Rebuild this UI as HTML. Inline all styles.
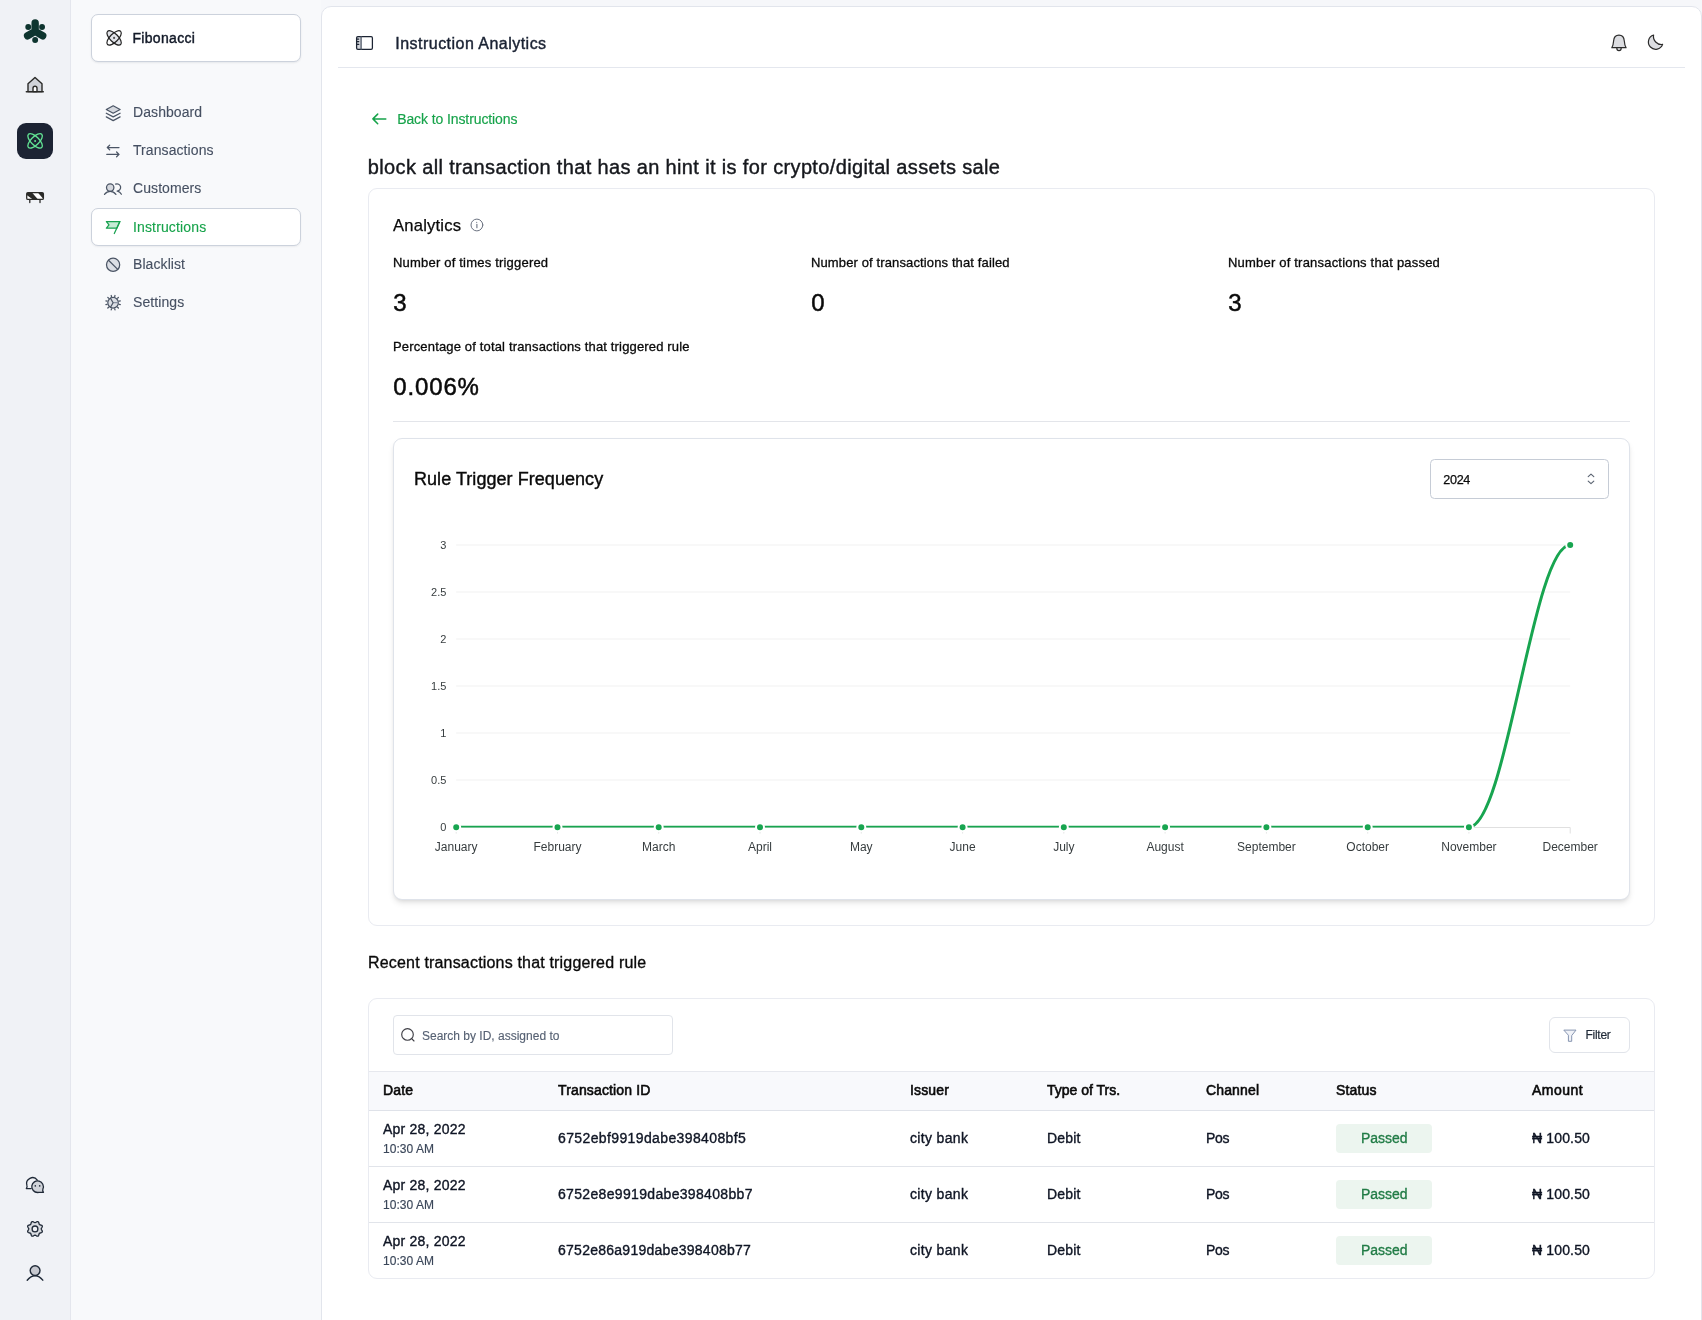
<!DOCTYPE html>
<html lang="en">
<head>
<meta charset="utf-8">
<title>Instruction Analytics</title>
<style>
*{box-sizing:border-box;margin:0;padding:0}
html,body{width:1702px;height:1320px;overflow:hidden}
body{font-family:"Liberation Sans",sans-serif;background:#f6f7fa;color:#111827;position:relative;-webkit-font-smoothing:antialiased}
.abs{position:absolute}
.t{position:absolute;white-space:nowrap;line-height:1}
.med{-webkit-text-stroke:0.3px currentColor}
svg{display:block;overflow:visible}

/* rail */
#rail{position:absolute;left:0;top:0;width:71px;height:1320px;background:#f0f2f6;border-right:1px solid #e4e6ed}
#rail .act{position:absolute;left:17px;top:123px;width:36px;height:36px;border-radius:9px;background:#1c2333}
.ri{position:absolute}

/* sidebar */
#side{position:absolute;left:71px;top:0;width:250px;height:1320px;background:#f8f9fb}
.org{position:absolute;left:91px;top:14px;width:210px;height:48px;border:1px solid #ccd2dc;border-radius:7px;background:#fff;box-shadow:0 1px 2px rgba(16,24,40,.08)}
.nav{position:absolute;left:91px;width:210px;height:38px}
.nav.on{border:1px solid #ccd2dc;border-radius:7px;background:#fff;box-shadow:0 1px 2px rgba(16,24,40,.06)}
.nav .lbl{position:absolute;left:42px;top:0;line-height:38px;font-size:14px;color:#465062;letter-spacing:.08px;-webkit-text-stroke:.12px #465062;white-space:nowrap}
.nav.on .lbl{color:#16a34a;-webkit-text-stroke:.12px #16a34a;letter-spacing:.14px;left:41px;top:-1.4px}
.nav svg{position:absolute;left:13px;top:10px}
.nav.on svg{left:12px;top:9px}

/* main */
#main{position:absolute;left:321px;top:6px;width:1381px;height:1340px;background:#fff;border:1px solid #e2e5ec;border-radius:10px}
.hr{position:absolute;height:1px;background:#e4e7ee}
.card{position:absolute;border:1px solid #e9ebf1;border-radius:9px;background:#fff}
.sl{font-size:13px;letter-spacing:.2px;color:#0a0a0a;-webkit-text-stroke:.3px #0a0a0a}
.sv{font-size:24px;color:#0a0a0a;-webkit-text-stroke:.5px #0a0a0a;margin-left:.3px}
.th{top:1083px;font-size:14px;color:#0a0a0a;-webkit-text-stroke:.58px #0a0a0a;letter-spacing:.14px}
.td{font-size:14px;color:#0f1524;-webkit-text-stroke:.36px #0f1524;letter-spacing:.15px}
#wrap{position:absolute;left:0;top:0;width:1702px;height:1320px;will-change:transform}
</style>
</head>
<body>
<div id="wrap">

<div id="rail">
  <div class="act"></div>
</div>

<div id="side"></div>
<div class="org"></div>
<div class="t" style="left:132.4px;top:30.6px;font-size:14px;font-weight:400;letter-spacing:.33px;-webkit-text-stroke:.42px #111827;color:#111827">Fibonacci</div>

<div class="nav" style="top:93px"><span class="lbl">Dashboard</span></div>
<div class="nav" style="top:131px"><span class="lbl">Transactions</span></div>
<div class="nav" style="top:169px"><span class="lbl">Customers</span></div>
<div class="nav on" style="top:208px"><span class="lbl">Instructions</span></div>
<div class="nav" style="top:245px"><span class="lbl">Blacklist</span></div>
<div class="nav" style="top:283px"><span class="lbl">Settings</span></div>

<div id="main"></div>
<!-- header -->
<div class="t" style="left:395.3px;top:36.2px;font-size:16px;letter-spacing:.47px;color:#1a2233;-webkit-text-stroke:.42px #1a2233">Instruction Analytics</div>
<div class="hr" style="left:338px;top:67px;width:1347px"></div>

<!-- back link + title -->
<div class="t" style="left:397.2px;top:112px;font-size:14px;letter-spacing:-.1px;color:#16a34a;-webkit-text-stroke:.15px #16a34a">Back to Instructions</div>
<div class="t" id="ttl" style="left:367.8px;top:156.8px;font-size:20px;letter-spacing:.355px;color:#16181d;-webkit-text-stroke:.4px #16181d">block all transaction that has an hint it is for crypto/digital assets sale</div>

<!-- analytics card -->
<div class="card" style="left:368px;top:188px;width:1287px;height:738px"></div>
<div class="t" style="left:393px;top:218.2px;font-size:16.6px;letter-spacing:.2px;color:#0a0a0a;-webkit-text-stroke:.25px #0a0a0a">Analytics</div>

<div class="t sl" style="left:393px;top:256px">Number of times triggered</div>
<div class="t sl" style="left:811px;top:256px;letter-spacing:.125px">Number of transactions that failed</div>
<div class="t sl" style="left:1228px;top:256px">Number of transactions that passed</div>
<div class="t sv" style="left:393px;top:291.2px">3</div>
<div class="t sv" style="left:811px;top:291.2px">0</div>
<div class="t sv" style="left:1228px;top:291.2px">3</div>
<div class="t sl" style="left:393px;top:340px;letter-spacing:.16px">Percentage of total transactions that triggered rule</div>
<div class="t sv" style="left:393px;top:375.1px;letter-spacing:.85px">0.006%</div>
<div class="hr" style="left:393px;top:421px;width:1237px;background:#e3e5ea"></div>

<!-- chart card -->
<div class="card" style="left:393px;top:438px;width:1237px;height:462px;border-color:#dfe3ea;box-shadow:0 4px 6px -1px rgba(0,0,0,.1),0 2px 4px -2px rgba(0,0,0,.1)"></div>
<div class="t" style="left:414px;top:470px;font-size:18px;letter-spacing:.05px;color:#0a0a0a;-webkit-text-stroke:.38px #0a0a0a">Rule Trigger Frequency</div>
<div class="abs" style="left:1430px;top:459px;width:179px;height:40px;border:1px solid #c6ccd6;border-radius:4.5px;background:#fff"></div>
<div class="t" style="left:1443.2px;top:473.5px;font-size:12.6px;letter-spacing:-.28px;color:#0a0a0a;-webkit-text-stroke:.25px #0a0a0a">2024</div>

<!-- recent transactions -->
<div class="t" style="left:368px;top:954.8px;font-size:16px;letter-spacing:.18px;color:#0a0a0a;-webkit-text-stroke:.33px #0a0a0a">Recent transactions that triggered rule</div>
<div class="card" style="left:368px;top:998px;width:1287px;height:281px;overflow:hidden">
  <div class="abs" style="left:-1px;top:72px;width:1287px;height:40px;background:#f8f9fc;border-top:1px solid #e6e8ee;border-bottom:1px solid #dfe2e9"></div>
  <div class="abs" style="left:-1px;top:167px;width:1287px;height:1px;background:#e1e4ea"></div>
  <div class="abs" style="left:-1px;top:223px;width:1287px;height:1px;background:#e1e4ea"></div>
</div>
<div class="abs" style="left:393px;top:1015px;width:280px;height:40px;border:1px solid #e1e4ea;border-radius:4px;background:#fff"></div>
<div class="t" style="left:422px;top:1029.7px;font-size:12px;color:#566173;-webkit-text-stroke:.12px #566173">Search by ID, assigned to</div>
<div class="abs" style="left:1549px;top:1017px;width:81px;height:36px;border:1px solid #e1e4ea;border-radius:6px;background:#fff"></div>
<div class="t" style="left:1585.5px;top:1029px;font-size:12px;letter-spacing:-.28px;color:#1f2937;-webkit-text-stroke:.2px #1f2937">Filter</div>

<div class="t th" style="left:383px">Date</div>
<div class="t th" style="left:558px">Transaction ID</div>
<div class="t th" style="left:910px">Issuer</div>
<div class="t th" style="left:1047px;letter-spacing:0">Type of Trs.</div>
<div class="t th" style="left:1206px">Channel</div>
<div class="t th" style="left:1336px">Status</div>
<div class="t th" style="left:1532px;letter-spacing:.5px">Amount</div>

<div class="t td" style="left:383px;top:1122px;letter-spacing:.22px">Apr 28, 2022</div>
<div class="t" style="left:383px;top:1142.5px;font-size:12px;letter-spacing:.05px;color:#3b475a;-webkit-text-stroke:.15px #3b475a">10:30 AM</div>
<div class="t td" style="left:558px;top:1131px;letter-spacing:.38px">6752ebf9919dabe398408bf5</div>
<div class="t td" style="left:910px;top:1131px;letter-spacing:.33px">city bank</div>
<div class="t td" style="left:1047px;top:1131px">Debit</div>
<div class="t td" style="left:1206px;top:1131px;letter-spacing:-.3px">Pos</div>
<div class="abs" style="left:1336px;top:1124px;width:96px;height:29px;border-radius:4px;background:#ecf5ef"></div>
<div class="t" style="left:1361px;top:1131px;font-size:14px;letter-spacing:-.05px;color:#217c46;-webkit-text-stroke:.33px #217c46">Passed</div>
<div class="t td" style="left:1532px;top:1131px">&#8358; 100.50</div>

<div class="t td" style="left:383px;top:1178px;letter-spacing:.22px">Apr 28, 2022</div>
<div class="t" style="left:383px;top:1198.5px;font-size:12px;letter-spacing:.05px;color:#3b475a;-webkit-text-stroke:.15px #3b475a">10:30 AM</div>
<div class="t td" style="left:558px;top:1187px;letter-spacing:.33px">6752e8e9919dabe398408bb7</div>
<div class="t td" style="left:910px;top:1187px;letter-spacing:.33px">city bank</div>
<div class="t td" style="left:1047px;top:1187px">Debit</div>
<div class="t td" style="left:1206px;top:1187px;letter-spacing:-.3px">Pos</div>
<div class="abs" style="left:1336px;top:1180px;width:96px;height:29px;border-radius:4px;background:#ecf5ef"></div>
<div class="t" style="left:1361px;top:1187px;font-size:14px;letter-spacing:-.05px;color:#217c46;-webkit-text-stroke:.33px #217c46">Passed</div>
<div class="t td" style="left:1532px;top:1187px">&#8358; 100.50</div>

<div class="t td" style="left:383px;top:1234px;letter-spacing:.22px">Apr 28, 2022</div>
<div class="t" style="left:383px;top:1254.5px;font-size:12px;letter-spacing:.05px;color:#3b475a;-webkit-text-stroke:.15px #3b475a">10:30 AM</div>
<div class="t td" style="left:558px;top:1243px;letter-spacing:.26px">6752e86a919dabe398408b77</div>
<div class="t td" style="left:910px;top:1243px;letter-spacing:.33px">city bank</div>
<div class="t td" style="left:1047px;top:1243px">Debit</div>
<div class="t td" style="left:1206px;top:1243px;letter-spacing:-.3px">Pos</div>
<div class="abs" style="left:1336px;top:1236px;width:96px;height:29px;border-radius:4px;background:#ecf5ef"></div>
<div class="t" style="left:1361px;top:1243px;font-size:14px;letter-spacing:-.05px;color:#217c46;-webkit-text-stroke:.33px #217c46">Passed</div>
<div class="t td" style="left:1532px;top:1243px">&#8358; 100.50</div>

<svg id="chart" class="abs" style="left:0;top:0;pointer-events:none" width="1702" height="1320" viewBox="0 0 1702 1320" font-family="Liberation Sans, sans-serif">
<g stroke="#f1f1f1" stroke-width="1">
<line x1="456.2" x2="1570.2" y1="545.0" y2="545.0"/>
<line x1="456.2" x2="1570.2" y1="592.0" y2="592.0"/>
<line x1="456.2" x2="1570.2" y1="639.0" y2="639.0"/>
<line x1="456.2" x2="1570.2" y1="686.0" y2="686.0"/>
<line x1="456.2" x2="1570.2" y1="733.0" y2="733.0"/>
<line x1="456.2" x2="1570.2" y1="780.0" y2="780.0"/>
</g>
<g stroke="#e0e0e0" stroke-width="1"><line x1="456.2" x2="1570.2" y1="827.5" y2="827.5"/>
<line x1="456.2" x2="456.2" y1="827.5" y2="833.5"/>
<line x1="557.5" x2="557.5" y1="827.5" y2="833.5"/>
<line x1="658.7" x2="658.7" y1="827.5" y2="833.5"/>
<line x1="760.0" x2="760.0" y1="827.5" y2="833.5"/>
<line x1="861.3" x2="861.3" y1="827.5" y2="833.5"/>
<line x1="962.6" x2="962.6" y1="827.5" y2="833.5"/>
<line x1="1063.8" x2="1063.8" y1="827.5" y2="833.5"/>
<line x1="1165.1" x2="1165.1" y1="827.5" y2="833.5"/>
<line x1="1266.4" x2="1266.4" y1="827.5" y2="833.5"/>
<line x1="1367.7" x2="1367.7" y1="827.5" y2="833.5"/>
<line x1="1468.9" x2="1468.9" y1="827.5" y2="833.5"/>
<line x1="1570.2" x2="1570.2" y1="827.5" y2="833.5"/>
</g>
<g fill="#373d3f" font-size="11" text-anchor="end">
<text x="446.4" y="549.0">3</text>
<text x="446.4" y="596.0">2.5</text>
<text x="446.4" y="643.0">2</text>
<text x="446.4" y="690.0">1.5</text>
<text x="446.4" y="737.0">1</text>
<text x="446.4" y="784.0">0.5</text>
<text x="446.4" y="831.0">0</text>
</g>
<g fill="#373d3f" font-size="12" text-anchor="middle">
<text x="456.2" y="850.8">January</text>
<text x="557.5" y="850.8">February</text>
<text x="658.7" y="850.8">March</text>
<text x="760.0" y="850.8">April</text>
<text x="861.3" y="850.8">May</text>
<text x="962.6" y="850.8">June</text>
<text x="1063.8" y="850.8">July</text>
<text x="1165.1" y="850.8">August</text>
<text x="1266.4" y="850.8">September</text>
<text x="1367.7" y="850.8">October</text>
<text x="1468.9" y="850.8">November</text>
<text x="1570.2" y="850.8">December</text>
</g>
<defs><clipPath id="cc"><rect x="440" y="530" width="1150" height="297.4"/></clipPath></defs>
<path d="M456.2,827.15 L1468.9,827.15 C1506.4,827.15 1532.7,545 1570.2,545" fill="none" stroke="#18a550" stroke-width="3" stroke-linecap="butt" clip-path="url(#cc)"/>
<g fill="#18a550" stroke="#fff" stroke-width="2">
<circle cx="456.2" cy="827.2" r="4"/>
<circle cx="557.5" cy="827.2" r="4"/>
<circle cx="658.7" cy="827.2" r="4"/>
<circle cx="760.0" cy="827.2" r="4"/>
<circle cx="861.3" cy="827.2" r="4"/>
<circle cx="962.6" cy="827.2" r="4"/>
<circle cx="1063.8" cy="827.2" r="4"/>
<circle cx="1165.1" cy="827.2" r="4"/>
<circle cx="1266.4" cy="827.2" r="4"/>
<circle cx="1367.7" cy="827.2" r="4"/>
<circle cx="1468.9" cy="827.2" r="4"/>
<circle cx="1570.2" cy="545" r="4"/>
</g>
</svg>

<!-- icon overlay: absolute pixel coordinates -->
<svg id="ico" class="abs" style="left:0;top:0;pointer-events:none" width="1702" height="1320" viewBox="0 0 1702 1320" fill="none" stroke-linecap="round" stroke-linejoin="round">
  <!-- logo -->
  <g fill="#0e352f" stroke="#0e352f">
    <path d="M35.15,31.4 L35.15,22.9 M35.15,31.4 L27.6,35.8 M35.15,31.4 L42.7,35.8" stroke-width="7.4" fill="none"/>
    <circle cx="28.25" cy="27" r="2.95" stroke="none"/><circle cx="42.05" cy="27" r="2.95" stroke="none"/><circle cx="35.15" cy="40.05" r="2.95" stroke="none"/>
  </g>
  <!-- home -->
  <g stroke="#2a2a28" stroke-width="1.4">
    <path d="M28,91.6 V83.8 L35,77.4 L42,83.8 V91.6Z" fill="#cfd2d8"/>
    <path d="M33,91.6 V88.3 a2,2 0 0 1 4,0 V91.6Z" fill="#fff"/>
    <path d="M26.3,91.7 H43.3"/>
  </g>
  <!-- atom active -->
  <g stroke="#62e394" stroke-width="1.35" transform="translate(35.1 140.9)">
    <ellipse rx="9.4" ry="4.1" transform="rotate(45)"/>
    <ellipse rx="9.4" ry="4.1" transform="rotate(-45)"/>
    <circle r="1" fill="#62e394" stroke="none"/>
  </g>
  <!-- barrier -->
  <g stroke="#2a2a28" stroke-width="1.3">
    <rect x="26.7" y="192.6" width="16.7" height="6.8" rx="1.2" fill="#fff"/>
    <path d="M27,193 H32.4 L37.6,199 H32.2 L27,195.2Z M38.2,193 H43 V198.6Z" fill="#2a2a28" stroke="none"/>
    <path d="M29.8,199.6 V202.6 M40,199.6 V202.6"/>
  </g>
  <!-- chat -->
  <g stroke="#1f2937" stroke-width="1.3">
    <path d="M31.2,1188.6 H26.3 c1,-1.2 1.1,-2 0.6,-3.3 a5.9,5.9 0 0 1 10.4,-5.2"/>
    <path d="M43.5,1192.3 c-1,-1.2 -1.1,-2 -0.6,-3.3 a5.8,5.8 0 1 0 -5.3,3.5 c1.3,0 2.3,-0.2 5.9,-0.2z" fill="#d0d3d9"/>
    <circle cx="35.3" cy="1185.9" r="0.8" fill="#1f2937" stroke="none"/><circle cx="39.7" cy="1185.9" r="0.8" fill="#1f2937" stroke="none"/>
  </g>
  <!-- gear -->
  <g stroke="#1f2937" stroke-width="1.3">
    <path d="M35.0,1222.7 L35.6,1222.5 L36.4,1222.0 L37.2,1221.6 L38.0,1221.6 L38.6,1222.2 L38.9,1223.0 L39.1,1223.9 L39.4,1224.5 L40.0,1224.8 L40.9,1225.0 L41.7,1225.3 L42.3,1225.9 L42.3,1226.7 L41.9,1227.5 L41.4,1228.3 L41.2,1228.9 L41.4,1229.5 L41.9,1230.3 L42.3,1231.1 L42.3,1231.9 L41.7,1232.5 L40.9,1232.8 L40.0,1233.0 L39.4,1233.3 L39.1,1233.9 L38.9,1234.8 L38.6,1235.6 L38.0,1236.2 L37.2,1236.2 L36.4,1235.8 L35.6,1235.3 L35.0,1235.1 L34.4,1235.3 L33.6,1235.8 L32.8,1236.2 L32.0,1236.2 L31.4,1235.6 L31.1,1234.8 L30.9,1233.9 L30.6,1233.3 L30.0,1233.0 L29.1,1232.8 L28.3,1232.5 L27.7,1231.9 L27.7,1231.1 L28.1,1230.3 L28.6,1229.5 L28.8,1228.9 L28.6,1228.3 L28.1,1227.5 L27.7,1226.7 L27.7,1225.9 L28.3,1225.3 L29.1,1225.0 L30.0,1224.8 L30.6,1224.5 L30.9,1223.9 L31.1,1223.0 L31.4,1222.2 L32.0,1221.6 L32.8,1221.6 L33.6,1222.0 L34.4,1222.5Z" fill="#d8dbe0"/>
    <circle cx="35" cy="1228.9" r="2.9" fill="#f0f2f6"/>
  </g>
  <!-- user -->
  <g stroke="#1f2937" stroke-width="1.4">
    <circle cx="35.1" cy="1270.6" r="4.9" fill="#c6c8cf"/>
    <path d="M27.2,1280.2 C29.5,1277.3 31.8,1275.7 35.1,1275.7 S40.6,1277.3 42.8,1280.2"/>
  </g>

  <!-- org atom -->
  <g stroke="#222" stroke-width="1.2" transform="translate(114.1 37.9)">
    <ellipse rx="9.3" ry="4.1" transform="rotate(45)" fill="#e2e4e9" stroke="none"/>
    <ellipse rx="9.3" ry="4.1" transform="rotate(-45)"/>
    <ellipse rx="9.3" ry="4.1" transform="rotate(45)"/>
    <circle r="1.1" fill="#555" stroke="none"/>
  </g>

  <!-- nav icons -->
  <g stroke="#4b5565" stroke-width="1.25">
    <!-- layers -->
    <path d="M113.2,105.8 L120.1,109.5 L113.2,113.2 L106.3,109.5Z" fill="#d5d8de"/>
    <path d="M106.3,113.2 L113.2,116.9 L120.1,113.2 M106.3,116.9 L113.2,120.6 L120.1,116.9"/>
    <!-- arrows -->
    <path d="M119,147.5 H107.3 M109.7,145.1 L107.3,147.5 L109.7,149.9 M106.8,154.4 H119 M116.6,152 L119,154.4 L116.6,156.8"/>
    <!-- users -->
    <circle cx="110.2" cy="187.6" r="3.7" fill="#d5d8de"/>
    <path d="M104.5,194.4 C106,192.5 107.8,191.4 110.2,191.4 S114.4,192.5 115.9,194.4"/>
    <path d="M115.6,184.1 a3.6,3.6 0 1 1 1.5,6.9 M117.5,191.2 c1.7,0.4 3,1.4 3.9,3"/>
    <!-- blacklist -->
    <circle cx="113.1" cy="264.8" r="6.6" fill="#dcdfe5"/>
    <path d="M108.5,260.2 L117.7,269.4"/>
    <!-- settings -->
    <circle cx="113.1" cy="302.7" r="5.3" fill="#dcdfe5"/>
    <path d="M113.6,302.7 H118.2" stroke="#8a93a3"/><path d="M113.1,302.7 L110.5,298.2 M113.1,302.7 L110.5,307.2"/>
    <path d="M119.2,304.3 L120.3,304.6 M117.6,307.2 L118.4,308.0 M114.7,308.8 L115.0,309.9 M111.5,308.8 L111.2,309.9 M108.6,307.2 L107.8,308.0 M107.0,304.3 L105.9,304.6 M107.0,301.1 L105.9,300.8 M108.6,298.2 L107.8,297.4 M111.5,296.6 L111.2,295.5 M114.7,296.6 L115.0,295.5 M117.6,298.2 L118.4,297.4 M119.2,301.1 L120.3,300.8"/>
  </g>
  <!-- flag (active) -->
  <g stroke="#1aa251" stroke-width="1.25">
    <path d="M106.4,221.6 H119.9 L116.8,228.2 H106.4 L109,224.9Z" fill="#c7ebd5"/>
    <path d="M119.9,221.6 L114.3,233.5"/>
  </g>
  <!-- sidebar toggle -->
  <g stroke="#1c2433" stroke-width="1.25">
    <path d="M358.1,36.6 H361.1 V49.4 H358.1 a1.5,1.5 0 0 1 -1.5,-1.5 V38.1 a1.5,1.5 0 0 1 1.5,-1.5z" fill="#d3d6dc" stroke="none"/>
    <rect x="356.6" y="36.6" width="15.8" height="12.8" rx="1.3"/>
    <path d="M361.1,36.6 V49.4" stroke="#4b5563"/>
    <path d="M357,39.1 H358.8 M357,41.6 H358.8 M357,44.4 H358.8" stroke-width="1.1"/>
  </g>
  <!-- bell -->
  <g stroke="#2b2b2b" stroke-width="1.2">
    <path d="M1616.8,48 a2.2,2.7 0 0 0 4.4,0" fill="#e9eaed"/>
    <path d="M1611.8,47.7 C1613.2,45.4 1613.4,44 1613.6,41 C1613.9,37.4 1615.9,35.2 1618.95,35.2 S1624,37.4 1624.3,41 C1624.5,44 1624.7,45.4 1626.1,47.7Z" fill="#dcdde1"/>
  </g>
  <!-- moon -->
  <path d="M1653.6,35 A7.3,7.3 0 1 0 1662.6,44.4 A8,8 0 0 1 1653.6,35Z" fill="#dcdde1" stroke="#2b2b2b" stroke-width="1.2"/>
  <!-- back arrow -->
  <path d="M385.8,118.9 H372.9 M377.7,114.1 L372.9,118.9 L377.7,123.7" stroke="#16a34a" stroke-width="1.5"/>
  <!-- info -->
  <g stroke="#6b7280" stroke-width="1">
    <circle cx="476.9" cy="225" r="5.9"/>
    <path d="M476.9,224.4 V227.8" stroke-width="1.1"/><circle cx="476.7" cy="222.3" r="0.6" fill="#6b7280" stroke="none"/>
  </g>
  <!-- select chevrons -->
  <path d="M1588.2,476.7 L1591,474.1 L1593.8,476.7 M1588.2,481.1 L1591,483.7 L1593.8,481.1" stroke="#5b6472" stroke-width="1.15"/>
  <!-- search -->
  <g stroke="#3f3f46" stroke-width="1.15">
    <circle cx="407.5" cy="1034.4" r="5.8"/><path d="M411.7,1038.6 L414,1041"/>
  </g>
  <!-- filter -->
  <path d="M1564.2,1030.1 H1576 L1571.7,1035.6 V1041.3 H1568.4 V1035.6Z" fill="#f0f2f7" stroke="#8594b0" stroke-width="1"/>
</svg>

</div>
</body>
</html>
